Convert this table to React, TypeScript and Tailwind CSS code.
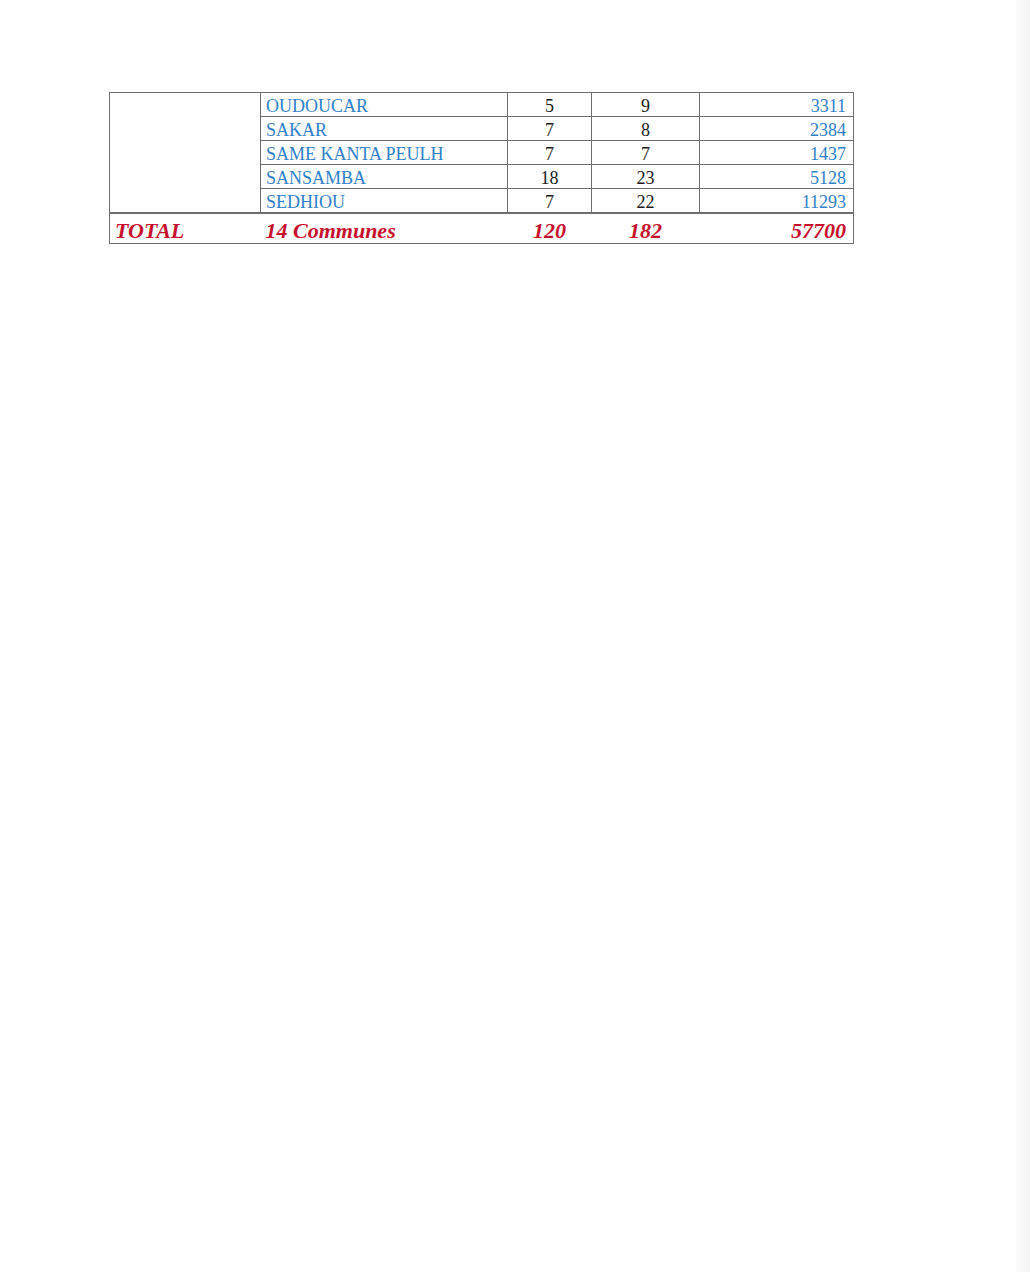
const rows = [
  { name: "OUDOUCAR", a: 5, b: 9, pop: 3311 },
  { name: "SAKAR", a: 7, b: 8, pop: 2384 },
  { name: "SAME KANTA PEULH", a: 7, b: 7, pop: 1437 },
  { name: "SANSAMBA", a: 18, b: 23, pop: 5128 },
  { name: "SEDHIOU", a: 7, b: 22, pop: 11293 },
];

const cell = "border border-[#6f6f6f] px-[5px] pt-[3px] pb-0 h-[24px] leading-[20px] align-middle";
const total = "border-b border-[#6f6f6f] pt-[4px] pb-0 leading-[25px]";

export default function App() {
  return (
    <div className="flex min-h-[1272px] bg-[#fefefe]" style={{ fontFamily: '"Liberation Serif", "Times New Roman", serif' }}>
      <div className="flex-1 pt-[92px] pl-[109px]">
        <table className="border-collapse table-fixed w-[744px] text-[18px]">
          <colgroup>
            <col className="w-[151px]" />
            <col className="w-[247px]" />
            <col className="w-[84px]" />
            <col className="w-[108px]" />
            <col className="w-[154px]" />
          </colgroup>
          <tbody>
            {rows.map((r, i) => (
              <tr key={r.name}>
                {i === 0 && <td rowSpan={5} className={cell}></td>}
                <td className={`${cell} text-[#2f80c9] text-left`}>{r.name}</td>
                <td className={`${cell} text-[#1a1a1a] text-center`}>{r.a}</td>
                <td className={`${cell} text-[#1a1a1a] text-center`}>{r.b}</td>
                <td className={`${cell} text-[#2f80c9] text-right pr-[7px]`}>{r.pop}</td>
              </tr>
            ))}
            <tr className="h-[30px] text-[22px] font-bold italic text-[#c8102e] border-t-2 border-[#6f6f6f]">
              <td className={`${total} border-l px-[5px]`}>TOTAL</td>
              <td className={`${total} px-[5px]`}>14 Communes</td>
              <td className={`${total} text-center`}>120</td>
              <td className={`${total} text-center`}>182</td>
              <td className={`${total} border-r text-right pr-[7px]`}>57700</td>
            </tr>
          </tbody>
        </table>
      </div>
      <div className="w-[16px] bg-gradient-to-r from-[#fefefe] to-[#f3f3f3]"></div>
    </div>
  );
}
